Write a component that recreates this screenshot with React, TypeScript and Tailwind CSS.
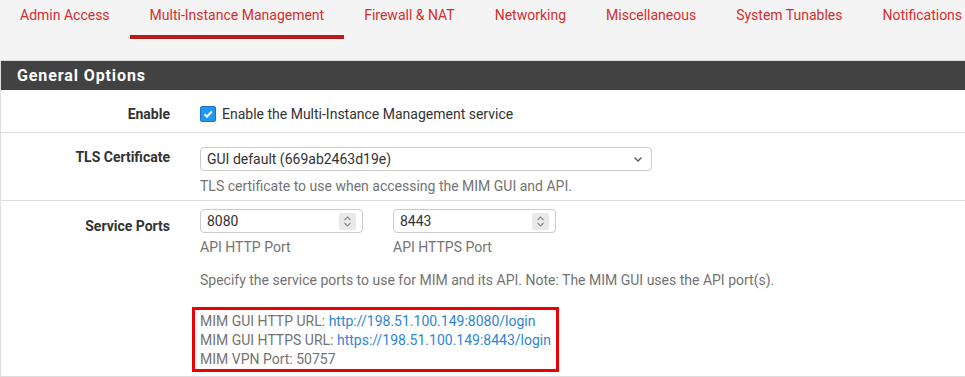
import React from "react";

const tabs = [
  "Admin Access",
  "Multi-Instance Management",
  "Firewall & NAT",
  "Networking",
  "Miscellaneous",
  "System Tunables",
  "Notifications",
];

function NumberBox({ value }: { value: string }) {
  return (
    <div className="relative flex h-[24px] w-[163px] items-center rounded-[4px] border border-[#cccccc] bg-white pl-[6px] text-[14px] text-[#333333]">
      {value}
      {/* spinner */}
      <div className="absolute right-[6px] top-[3px] flex h-[17px] w-[17px] flex-col items-center justify-center rounded-[2px] bg-[#e9e9e9]">
        <svg width="9" height="13" viewBox="0 0 9 13" fill="none" stroke="#8a8a8a" strokeWidth="1.2">
          <path d="M1.5 5 L4.5 2 L7.5 5" />
          <path d="M1.5 8 L4.5 11 L7.5 8" />
        </svg>
      </div>
    </div>
  );
}

export default function App() {
  return (
    <div
      className="h-[377px] w-[965px] overflow-hidden bg-[#f4f4f4]"
      style={{ fontFamily: "Roboto, 'Liberation Sans', sans-serif" }}
    >
      {/* Tabs */}
      <div className="flex h-[60px] items-start">
        {tabs.map((t) => (
          <div key={t} className="flex h-[39px] flex-col">
            <div className="whitespace-nowrap px-[20px] pt-[5px] text-[14px] leading-[20px] text-[#d32f2f]">
              {t}
            </div>
            <div
              className={
                t === "Multi-Instance Management"
                  ? "mt-auto h-[4px] bg-[#b71c1c]"
                  : "mt-auto h-[4px]"
              }
            />
          </div>
        ))}
      </div>

      {/* Panel */}
      <div className="w-[1000px] border-l border-t border-[#dddddd] bg-white">
        <div className="flex h-[29px] items-center bg-[#424242] pl-[16px] text-[16px] font-bold tracking-[0.9px] text-white">
          General Options
        </div>

        {/* Enable */}
        <div className="flex h-[43px] border-b border-[#dddddd]">
          <div className="w-[169px] pt-[14px] text-right text-[14px] font-bold leading-[20px] text-[#333333]">
            Enable
          </div>
          <div className="ml-[30px] flex items-center gap-[6px] pt-[14px] self-start text-[14px] leading-[20px] text-[#333333]">
            <div className="flex h-[16px] w-[16px] items-center justify-center rounded-[2px] border border-[#1a73c6] bg-[#2196f3]">
              <svg width="12" height="12" viewBox="0 0 12 12" fill="none" stroke="white" strokeWidth="2">
                <path d="M2.5 6.2 L5 8.7 L9.8 3.3" />
              </svg>
            </div>
            Enable the Multi-Instance Management service
          </div>
        </div>

        {/* TLS Certificate */}
        <div className="flex h-[68px] border-b border-[#dddddd]">
          <div className="w-[169px] pt-[14px] text-right text-[14px] font-bold leading-[20px] text-[#333333]">
            TLS Certificate
          </div>
          <div className="ml-[30px] pt-[14px]">
            <div className="flex h-[24px] w-[452px] items-center justify-between rounded-[4px] border border-[#cccccc] bg-white pl-[6px] pr-[8px] text-[14px] text-[#333333]">
              GUI default (669ab2463d19e)
              <svg width="10" height="7" viewBox="0 0 10 7" fill="none" stroke="#555555" strokeWidth="1.3">
                <path d="M1.5 1.5 L5 5 L8.5 1.5" />
              </svg>
            </div>
            <div className="pt-[5px] text-[14px] leading-[20px] text-[#737373]">
              TLS certificate to use when accessing the MIM GUI and API.
            </div>
          </div>
        </div>

        {/* Service Ports */}
        <div className="flex h-[176px] border-b border-[#dddddd]">
          <div className="w-[169px] pt-[15px] text-right text-[14px] font-bold leading-[20px] text-[#333333]">
            Service Ports
          </div>
          <div className="ml-[30px] pt-[8px]">
            <div className="flex gap-[30px]">
              <div>
                <NumberBox value="8080" />
                <div className="pt-[4px] text-[14px] leading-[20px] text-[#737373]">API HTTP Port</div>
              </div>
              <div>
                <NumberBox value="8443" />
                <div className="pt-[4px] text-[14px] leading-[20px] text-[#737373]">API HTTPS Port</div>
              </div>
            </div>
            <div className="pt-[13px] text-[14px] leading-[20px] text-[#737373]">
              Specify the service ports to use for MIM and its API. Note: The MIM GUI uses the API port(s).
            </div>
            <div className="-ml-[8px] mt-[17px] w-[367px] border-[3px] border-[#ee0000] pl-[5px] pt-[2px] text-[14px] leading-[19px] text-[#737373]">
              <div>
                MIM GUI HTTP URL: <span className="text-[#2e86d4]">http://198.51.100.149:8080/login</span>
              </div>
              <div>
                MIM GUI HTTPS URL: <span className="text-[#2e86d4]">https://198.51.100.149:8443/login</span>
              </div>
              <div>MIM VPN Port: 50757</div>
            </div>
          </div>
        </div>
      </div>
    </div>
  );
}
